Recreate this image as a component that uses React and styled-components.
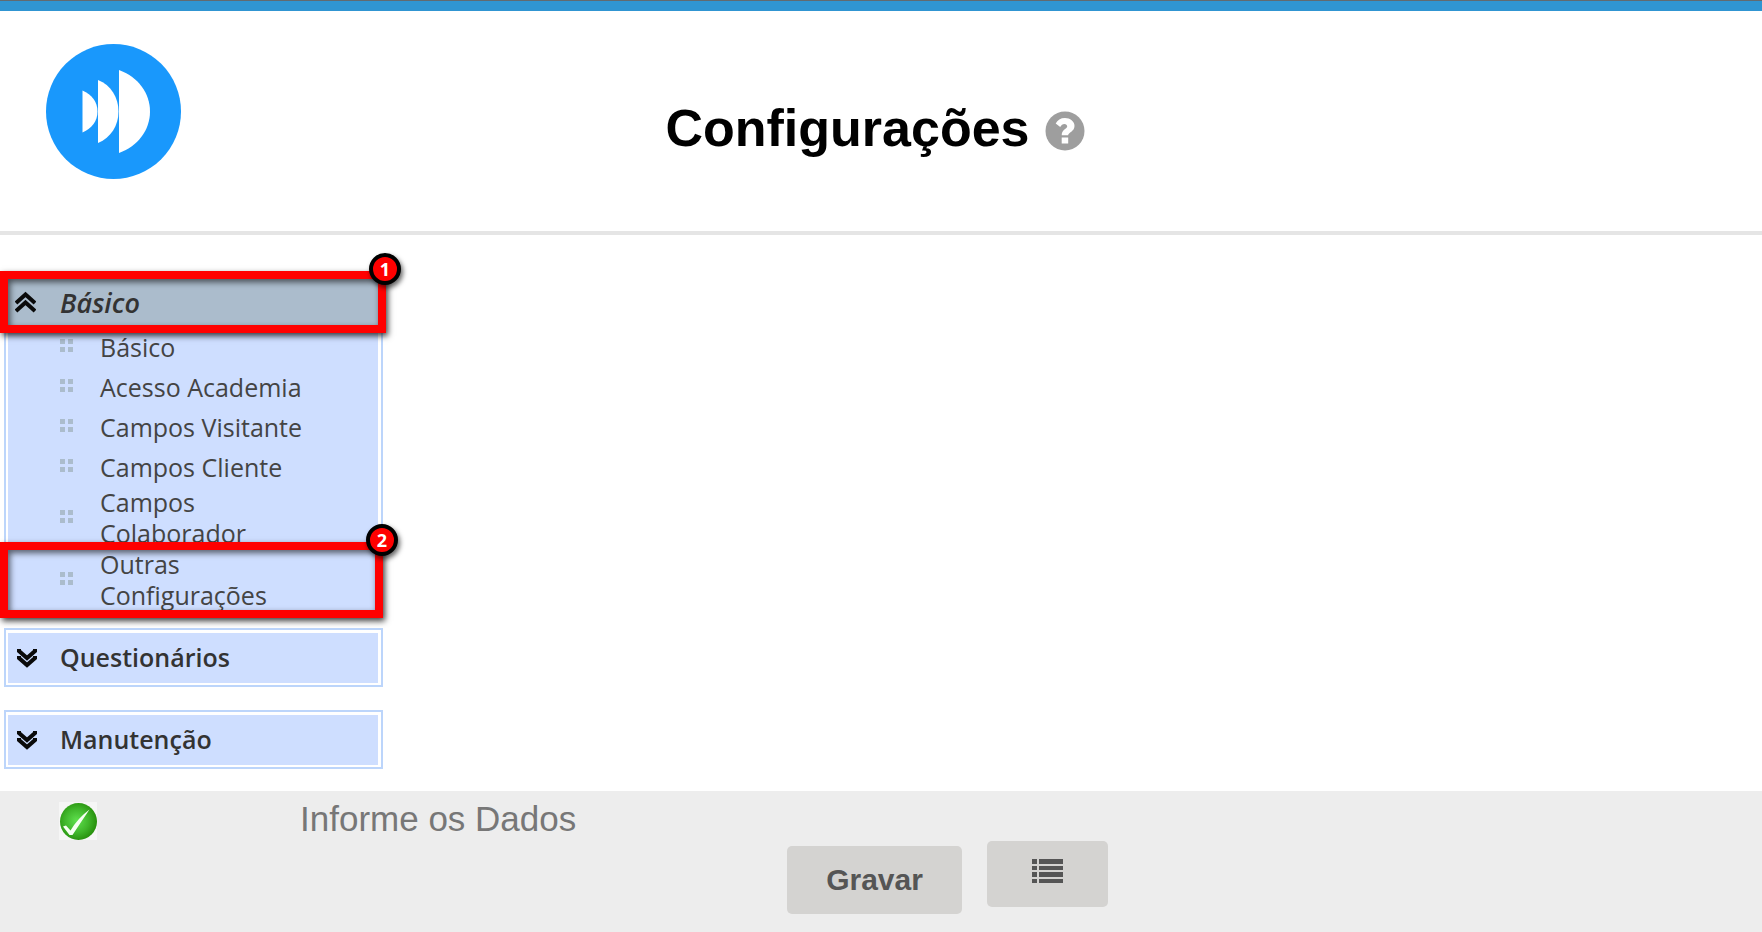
import React from "react";
import styled, { createGlobalStyle, css } from "styled-components";

const GlobalStyle = createGlobalStyle`
  * { box-sizing: border-box; }
  body {
    margin: 0;
    background: #fff;
    font-family: "Liberation Sans", Arial, sans-serif;
  }
`;

const Page = styled.div`
  display: flex;
  flex-direction: column;
  min-height: 100vh;
`;

const TopBar = styled.div`
  height: 11px;
  background: #3095d2;
  border-top: 1px solid #626a70;
`;

const Header = styled.header`
  display: grid;
  grid-template-columns: 1fr auto 1fr;
  align-items: start;
  padding: 33px 46px 52px;
  border-bottom: 4px solid #e5e5e5;
`;

const LogoLink = styled.a`
  display: flex;
  justify-self: start;
`;

const TitleGroup = styled.div`
  display: flex;
  align-items: center;
  gap: 15px;
  padding-top: 53px;
  padding-right: 12px;
`;

const Title = styled.h1`
  margin: 0;
  font-size: 52px;
  line-height: 62px;
  color: #000;
`;

const HelpButton = styled.button`
  display: flex;
  padding: 6px 0 0;
  border: 0;
  background: none;
`;

const Sidebar = styled.nav`
  display: flex;
  flex-direction: column;
  width: 387px;
  padding: 36px 0 22px;
  font-family: "Trebuchet MS", "Open Sans", sans-serif;
  font-size: 25px;
  line-height: 31px;
`;

const framed = css`
  width: 379px;
  margin-left: 4px;
  border: 2px solid #bcd5fb;
  background: #cedeff;
  box-shadow: inset 0 0 0 2px #fff;
`;

const SectionButton = styled.button`
  display: flex;
  align-items: center;
  gap: 24px;
  font: inherit;
  font-weight: 600;
  color: #333;
  text-align: left;
`;

const OpenGroup = styled.div`
  position: relative;
  z-index: 1;
`;

const OpenSection = styled(SectionButton)`
  width: 378px;
  height: 62px;
  padding: 0 15px;
  border: 0;
  background: #abbccc;
  font-size: 27px;
  font-style: italic;
`;

const ClosedSection = styled(SectionButton)`
  ${framed}
  gap: 23px;
  height: 59px;
  padding: 0 10px;
  box-shadow: inset 2px 3px #fff, inset -3px -2px #fff;

  & + & {
    margin-top: 23px;
  }
`;

const Submenu = styled.ul`
  ${framed}
  margin: -6px 0 17px 4px;
  padding: 0;
  border-width: 0 2px;
  box-shadow: inset 2px 0 #fff, inset -3px 0 #fff;
  list-style: none;
`;

const Row = styled.li`
  position: relative;
  display: flex;
  align-items: center;
  gap: 27px;
  min-height: 40px;
  padding-left: 54px;
`;

const RowLink = styled.a`
  width: 230px;
  color: #444;
  text-decoration: none;
`;

const Outline = styled.div`
  position: absolute;
  inset: ${(p) => p.$inset};
  border: 8px solid #f00;
  box-shadow: 2px 3px 6px rgba(0, 0, 0, 0.75), inset 2px 3px 6px rgba(0, 0, 0, 0.6);
  pointer-events: none;
`;

const Badge = styled.span`
  position: absolute;
  top: -26px;
  right: -23px;
  width: 32px;
  height: 32px;
  border: 4px solid #000;
  border-radius: 50%;
  background: #f00;
  box-shadow: 2px 3px 5px rgba(0, 0, 0, 0.6);
  color: #fff;
  font: bold 18px/24px "Open Sans", sans-serif;
  text-align: center;
`;

const Footer = styled.footer`
  display: grid;
  grid-template-columns: 38px 1fr;
  column-gap: 203px;
  align-content: start;
  flex: 1;
  padding: 8px 59px 16px;
  background: #ededed;
`;

const StatusIcon = styled.span`
  display: flex;
  padding: 3px 0 1px;
`;

const Message = styled.p`
  margin: 0;
  color: #777;
  font-size: 35px;
  line-height: 40px;
`;

const Actions = styled.div`
  grid-column: 1 / -1;
  display: flex;
  justify-content: center;
  align-items: flex-start;
  gap: 25px;
  padding-left: 133px;
`;

const Action = styled.button`
  display: flex;
  justify-content: center;
  align-items: center;
  border: 0;
  border-radius: 5px;
  background: #d4d3d1;
  color: #555;
  font: bold 30px "Liberation Sans", Arial, sans-serif;
`;

const SaveAction = styled(Action)`
  width: 175px;
  height: 68px;
  margin-top: 5px;
`;

const ListAction = styled(Action)`
  width: 121px;
  height: 66px;
  padding-bottom: 6px;
`;

const Logo = () => (
  <svg width="135" height="135" viewBox="0 0 135 135" aria-hidden="true">
    <circle cx="67.5" cy="67.5" r="67.5" fill="#1998fc" />
    <g fill="#fff">
      <path d="M36.5 46.5C46 50.500 51.500 58 51.500 67.500S46 84.500 36.500 88.500Z" />
      <path d="M52 36C65 41 72.500 53.500 72.500 67.500S65 93.500 52 99Z" />
      <path d="M73 26C92 33 104 49 104 67.500S92 102 73 109Z" />
    </g>
  </svg>
);

const Help = () => (
  <svg width="40" height="40" viewBox="0 0 40 40" aria-hidden="true">
    <circle cx="20" cy="20" r="19.500" fill="#9e9e9e" />
    <path fill="#fff" d="M16.700 26.500h6.500v6h-6.500zM10.700 12.500C12.500 9 15.500 7 20 7c5 0 9.500 3.500 9.500 8 0 5.500-6.300 6.500-6.300 9.300h-6.500c0-6 5.500-6.300 5.500-8.800 0-1.500-1.200-2.400-2.700-2.400-2.200 0-3 1.200-4.300 2.800z" />
  </svg>
);

const Chevrons = ({ up }) => (
  <svg width="21" height="22" viewBox="0 0 21 22" fill="none" stroke="#0a0a0a" strokeWidth="4" aria-hidden="true">
    {up ? (
      <path d="M1 12L10.500 3.500L20 12M1 20L10.500 11.500L20 20" />
    ) : (
      <path d="M3 2V4L11 11L19 4V2M3 9V11L11 18L19 11V9" />
    )}
  </svg>
);

const DotsSvg = styled.svg`
  margin-bottom: 3px;
`;

const Dots = () => (
  <DotsSvg width="13" height="13" viewBox="0 0 13 13" fill="#abbccc" aria-hidden="true">
    <path d="M0 0h5v5H0zM8 0h5v5H8zM0 8h5v5H0zM8 8h5v5H8z" />
  </DotsSvg>
);

const CheckIcon = () => (
  <svg width="38" height="38" viewBox="0 0 38 38" role="img" aria-label="OK">
    <defs>
      <radialGradient id="ball" cx="45%" cy="48%" r="55%">
        <stop offset="0" stopColor="#5fe04e" />
        <stop offset="0.600" stopColor="#3fb52a" />
        <stop offset="1" stopColor="#278f0c" />
      </radialGradient>
    </defs>
    <path fill="#f6f6f6" d="M0 0h38v38H0z" />
    <circle cx="19.500" cy="19.500" r="18.500" fill="url(#ball)" />
    <path d="M4 24.500L7 23.500L11.500 28.500Q19 16 30.500 7.500Q22 20 13.500 33L10.500 33Z" fill="#f6fff2" />
  </svg>
);

const ListIcon = () => (
  <svg width="31" height="25" viewBox="0 0 31 25" fill="#555" aria-hidden="true">
    <path d="M0 0h5v5H0zM7 0h24v5H7zM0 7h5v4H0zM7 7h24v4H7zM0 13h5v5H0zM7 13h24v5H7zM0 20h5v4H0zM7 20h24v4H7z" />
  </svg>
);

const items = ["Básico", "Acesso Academia", "Campos Visitante", "Campos Cliente", "Campos Colaborador"];

export default function App() {
  return (
    <Page>
      <GlobalStyle />
      <TopBar />
      <Header>
        <LogoLink href="#" aria-label="Início"><Logo /></LogoLink>
        <TitleGroup>
          <Title>Configurações</Title>
          <HelpButton aria-label="Ajuda"><Help /></HelpButton>
        </TitleGroup>
      </Header>
      <Sidebar>
        <OpenGroup>
          <OpenSection aria-expanded="true"><Chevrons up />Básico</OpenSection>
          <Outline $inset="0 1px 0 0"><Badge>1</Badge></Outline>
        </OpenGroup>
        <Submenu>
          {items.map((item) => (
            <Row key={item}><Dots /><RowLink href="#">{item}</RowLink></Row>
          ))}
          <Row>
            <Dots />
            <RowLink href="#">Outras Configurações</RowLink>
            <Outline $inset="-7px -2px -7px -6px"><Badge>2</Badge></Outline>
          </Row>
        </Submenu>
        <ClosedSection aria-expanded="false"><Chevrons />Questionários</ClosedSection>
        <ClosedSection aria-expanded="false"><Chevrons />Manutenção</ClosedSection>
      </Sidebar>
      <Footer>
        <StatusIcon><CheckIcon /></StatusIcon>
        <Message>Informe os Dados</Message>
        <Actions>
          <SaveAction>Gravar</SaveAction>
          <ListAction aria-label="Lista"><ListIcon /></ListAction>
        </Actions>
      </Footer>
    </Page>
  );
}
